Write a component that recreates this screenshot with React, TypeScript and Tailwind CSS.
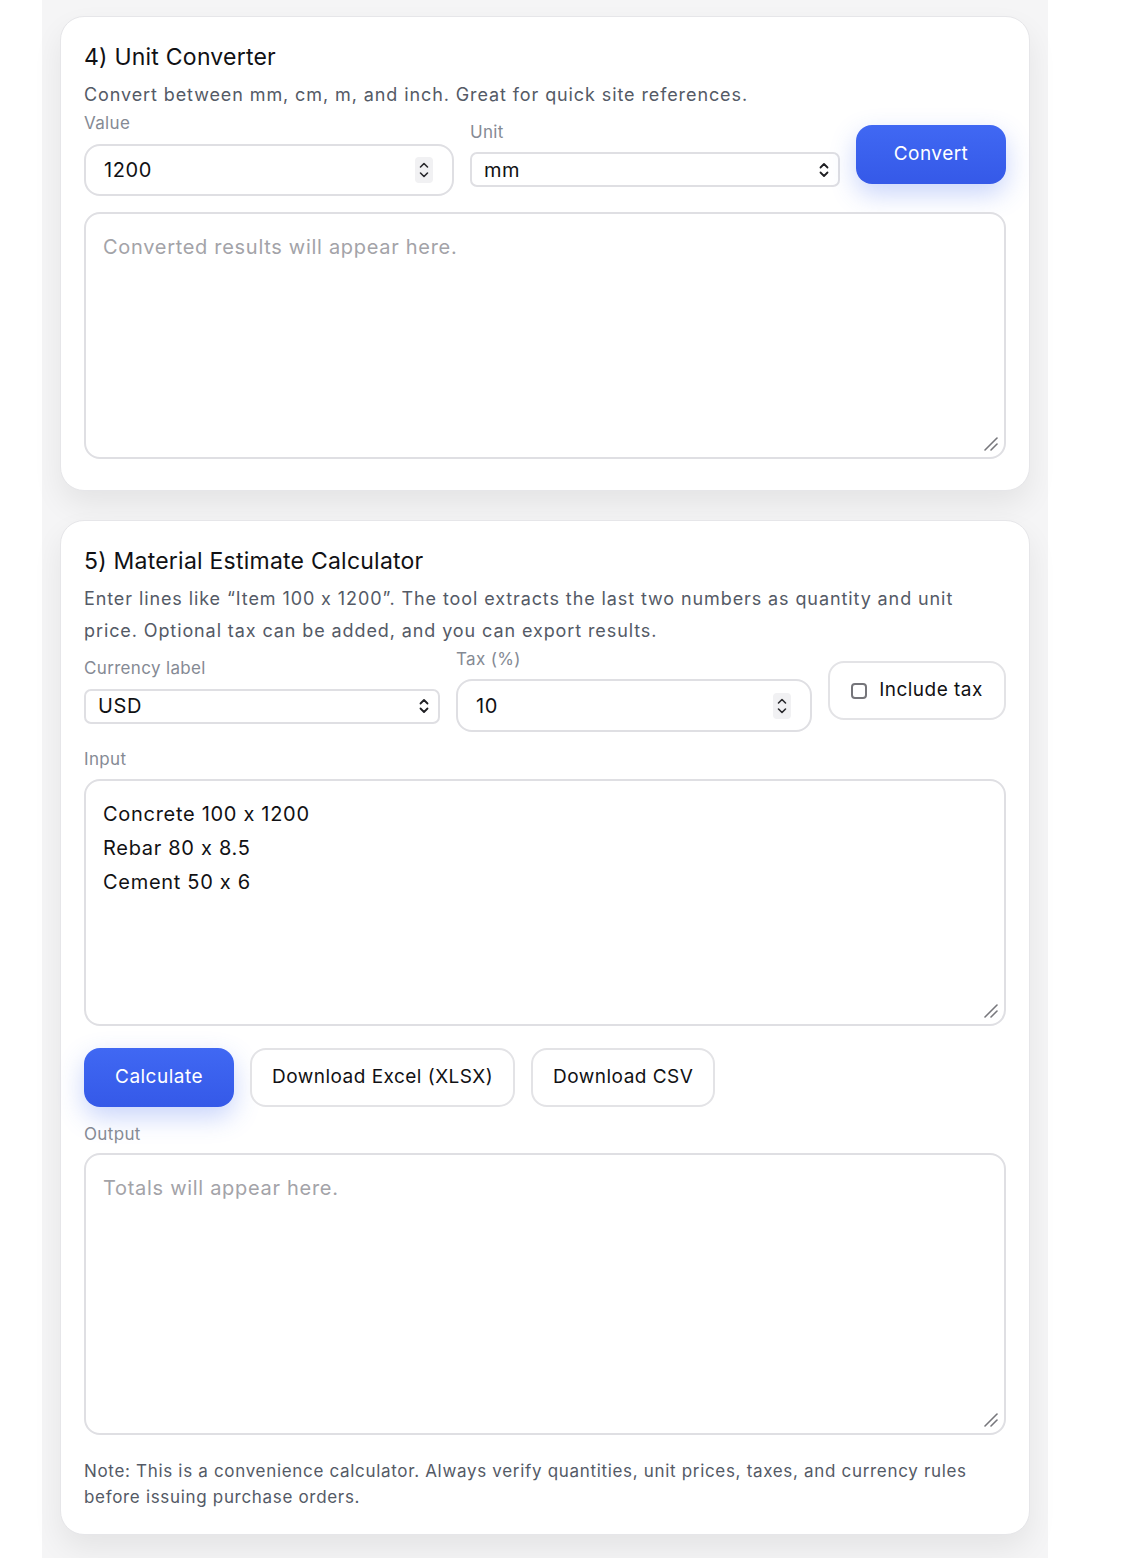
import { ReactNode } from 'react'

const SelectChevron = () => (
  <svg width="10" height="16" viewBox="0 0 10 16" fill="none" stroke="#1f1f23" strokeWidth="1.8" strokeLinecap="round" strokeLinejoin="round">
    <path d="M1.5 5.5 5 2l3.5 3.5" />
    <path d="M1.5 10.5 5 14l3.5-3.5" />
  </svg>
)

const Spinner = () => (
  <div className="flex h-[26px] w-[18px] items-center justify-center rounded-[4px] bg-[#f1f1f3]">
    <svg width="10" height="18" viewBox="0 0 10 18" fill="none" stroke="#2a2a2e" strokeWidth="1.6" strokeLinecap="round" strokeLinejoin="round">
      <path d="M1.5 6 5 2.5 8.5 6" />
      <path d="M1.5 12 5 15.5 8.5 12" />
    </svg>
  </div>
)

const Grip = () => (
  <svg
    className="pointer-events-none absolute right-[7px] bottom-[7px]"
    width="16"
    height="16"
    viewBox="0 0 16 16"
    fill="none"
    stroke="#77777c"
    strokeWidth="1.6"
    strokeLinecap="round"
  >
    <path d="M2 14 14 2" />
    <path d="M8 14 14 8" />
  </svg>
)

const Label = ({ children }: { children: ReactNode }) => (
  <div className="text-[17px] leading-5 tracking-[0.02em] text-[#858a94]">{children}</div>
)

const Area = ({ h, value, placeholder }: { h: string; value?: string; placeholder?: string }) => (
  <div className="relative">
    <textarea
      readOnly
      defaultValue={value}
      placeholder={placeholder}
      className={`${h} block w-full resize-none rounded-[16px] border-2 border-[#dfdfe3] bg-white px-[17px] py-[16px] text-[20px] leading-[34px] tracking-[0.035em] text-[#111114] outline-none placeholder:text-[#a3a3a8]`}
    />
    <Grip />
  </div>
)

const Card = ({ children, pb }: { children: ReactNode; pb: string }) => (
  <section className={`rounded-[24px] border border-[#e6e6e9] bg-white px-[23px] pt-6 ${pb} shadow-[0_14px_30px_rgba(0,0,0,0.07)]`}>
    {children}
  </section>
)

const Title = ({ children }: { children: ReactNode }) => (
  <h2 className="text-[23px] leading-8 tracking-[0.01em] text-[#111114]">{children}</h2>
)

const Desc = ({ children }: { children: ReactNode }) => (
  <p className="mt-1.5 text-[18px] leading-8 tracking-[0.05em] text-[#545a66]">{children}</p>
)

const inputText = 'text-[20px] tracking-[0.03em] text-[#111114]'
const btnText = 'text-[19px] tracking-[0.025em]'

export default function App() {
  return (
    <div className="min-h-screen w-full bg-white" style={{ fontFamily: 'Inter, "Noto Sans", sans-serif' }}>
      <div className="ml-[42px] w-[1006px] bg-[#f5f5f6] px-[18px] pt-4 pb-6">
        <div className="flex flex-col gap-[29px]">
          <Card pb="pb-[31px]">
            <Title>4) Unit Converter</Title>
            <Desc>Convert between mm, cm, m, and inch. Great for quick site references.</Desc>
            <div className="mt-[2px] grid grid-cols-[1fr_1fr_150px] items-center gap-4">
              <div className="flex flex-col gap-[11px]">
                <Label>Value</Label>
                <div className="flex h-[52px] items-center justify-between rounded-[16px] border-2 border-[#dfdfe3] bg-white pr-[19px] pl-[18px]">
                  <span className={inputText}>1200</span>
                  <Spinner />
                </div>
              </div>
              <div className="flex flex-col gap-[10px]">
                <Label>Unit</Label>
                <div className="flex h-[35px] items-center justify-between rounded-[7px] border-2 border-[#dfdfe3] bg-white pr-[9px] pl-[12px]">
                  <span className={inputText}>mm</span>
                  <SelectChevron />
                </div>
              </div>
              <button className={`h-[59px] rounded-[16px] bg-gradient-to-b from-[#4068f3] to-[#3559e8] text-white shadow-[0_10px_26px_rgba(59,99,240,0.28)] ${btnText}`}>
                Convert
              </button>
            </div>
            <div className="mt-[16px]">
              <Area h="h-[247px]" placeholder="Converted results will appear here." />
            </div>
          </Card>

          <Card pb="pb-6">
            <Title>5) Material Estimate Calculator</Title>
            <Desc>
              Enter lines like “Item 100 x 1200”. The tool extracts the last two numbers as quantity and unit
              price. Optional tax can be added, and you can export results.
            </Desc>
            <div className="mt-[2px] grid grid-cols-[1fr_1fr_178px] items-center gap-4">
              <div className="flex flex-col gap-[11px]">
                <Label>Currency label</Label>
                <div className="flex h-[35px] items-center justify-between rounded-[7px] border-2 border-[#dfdfe3] bg-white pr-[9px] pl-[12px]">
                  <span className={inputText}>USD</span>
                  <SelectChevron />
                </div>
              </div>
              <div className="flex flex-col gap-[10px]">
                <Label>Tax (%)</Label>
                <div className="flex h-[53px] items-center justify-between rounded-[16px] border-2 border-[#dfdfe3] bg-white pr-[19px] pl-[18px]">
                  <span className={inputText}>10</span>
                  <Spinner />
                </div>
              </div>
              <label className="flex h-[59px] items-center justify-center gap-[12px] rounded-[16px] border-2 border-[#e3e3e6] bg-white">
                <span className="h-[16px] w-[16px] rounded-[4px] border-2 border-[#75757a]" />
                <span className={`${btnText} text-[#111114]`}>Include tax</span>
              </label>
            </div>

            <div className="mt-[17px] flex flex-col gap-[10px]">
              <Label>Input</Label>
              <Area h="h-[247px]" value={'Concrete 100 x 1200\nRebar 80 x 8.5\nCement 50 x 6'} />
            </div>

            <div className="mt-[22px] flex gap-4">
              <button className={`h-[59px] w-[150px] rounded-[16px] bg-gradient-to-b from-[#4068f3] to-[#3559e8] text-white shadow-[0_10px_26px_rgba(59,99,240,0.28)] ${btnText}`}>
                Calculate
              </button>
              <button className={`h-[59px] rounded-[16px] border-2 border-[#e3e3e6] bg-white px-[20px] text-[#111114] ${btnText}`}>
                Download Excel (XLSX)
              </button>
              <button className={`h-[59px] rounded-[16px] border-2 border-[#e3e3e6] bg-white px-[20px] text-[#111114] ${btnText}`}>
                Download CSV
              </button>
            </div>

            <div className="mt-[17px] flex flex-col gap-[9px]">
              <Label>Output</Label>
              <Area h="h-[282px]" placeholder="Totals will appear here." />
            </div>

            <p className="mt-[23px] text-[17px] leading-[26px] tracking-[0.04em] text-[#545a66]">
              Note: This is a convenience calculator. Always verify quantities, unit prices, taxes, and currency rules
              before issuing purchase orders.
            </p>
          </Card>
        </div>
      </div>
    </div>
  )
}
